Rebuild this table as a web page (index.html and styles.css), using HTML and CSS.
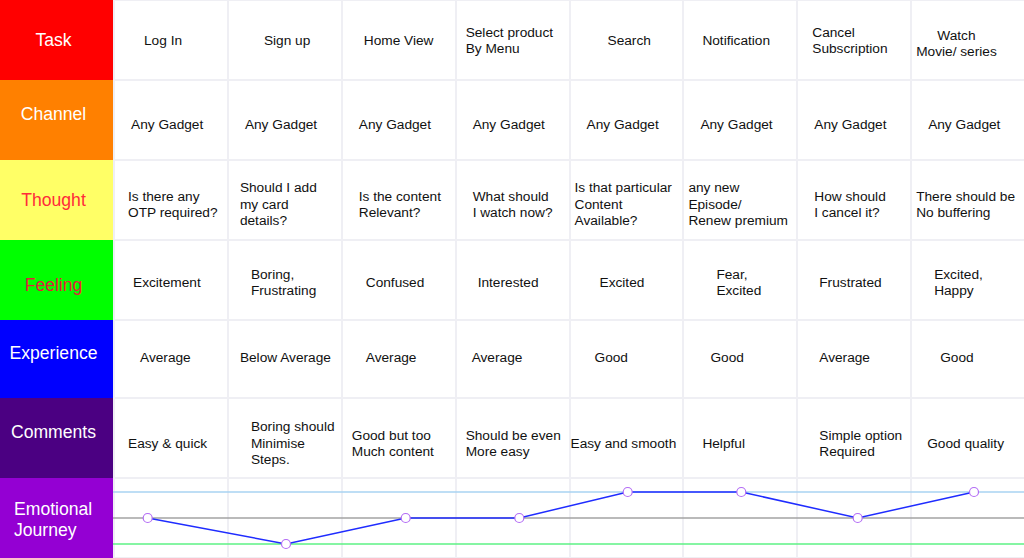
FILE: index.html
```html
<!DOCTYPE html>
<html lang="en">
<head>
<meta charset="utf-8">
<title>Customer Journey Map</title>
<link rel="stylesheet" href="styles.css">
</head>
<body>
<div class="map">
  <div class="labels">
    <div class="label task">Task</div>
    <div class="label channel">Channel</div>
    <div class="label thought">Thought</div>
    <div class="label feeling">Feeling</div>
    <div class="label experience">Experience</div>
    <div class="label comments">Comments</div>
    <div class="label journey">Emotional<br>Journey</div>
  </div>
  <div class="board">
    <div class="row r-task">
      <div class="cell i29">Log In</div>
      <div class="cell i35">Sign up</div>
      <div class="cell i21">Home View</div>
      <div class="cell i9">Select product<br>By Menu</div>
      <div class="cell i37">Search</div>
      <div class="cell i18">Notification</div>
      <div class="cell i14">Cancel<br>Subscription</div>
      <div class="cell i4 centered low">Watch<br>Movie/ series</div>
    </div>
    <div class="row r-channel">
      <div class="cell i16">Any Gadget</div>
      <div class="cell i16">Any Gadget</div>
      <div class="cell i16">Any Gadget</div>
      <div class="cell i16">Any Gadget</div>
      <div class="cell i16">Any Gadget</div>
      <div class="cell i16">Any Gadget</div>
      <div class="cell i16">Any Gadget</div>
      <div class="cell i16">Any Gadget</div>
    </div>
    <div class="row r-thought">
      <div class="cell i13">Is there any<br>OTP required?</div>
      <div class="cell i11">Should I add<br>my card<br>details?</div>
      <div class="cell i16">Is the content<br>Relevant?</div>
      <div class="cell i16">What should<br>I watch now?</div>
      <div class="cell i4">Is that particular<br>Content<br>Available?</div>
      <div class="cell i4">any new<br>Episode/<br>Renew premium</div>
      <div class="cell i16">How should<br>I cancel it?</div>
      <div class="cell i4">There should be<br>No buffering</div>
    </div>
    <div class="row r-feeling">
      <div class="cell i18">Excitement</div>
      <div class="cell i22">Boring,<br>Frustrating</div>
      <div class="cell i23">Confused</div>
      <div class="cell i21">Interested</div>
      <div class="cell i29">Excited</div>
      <div class="cell i32">Fear,<br>Excited</div>
      <div class="cell i21">Frustrated</div>
      <div class="cell i22">Excited,<br>Happy</div>
    </div>
    <div class="row r-experience">
      <div class="cell i25">Average</div>
      <div class="cell i11">Below Average</div>
      <div class="cell i23">Average</div>
      <div class="cell i15">Average</div>
      <div class="cell i24">Good</div>
      <div class="cell i26">Good</div>
      <div class="cell i21">Average</div>
      <div class="cell i28">Good</div>
    </div>
    <div class="row r-comments">
      <div class="cell i13">Easy &amp; quick</div>
      <div class="cell i22">Boring should<br>Minimise<br>Steps.</div>
      <div class="cell i9">Good but too<br>Much content</div>
      <div class="cell i9">Should be even<br>More easy</div>
      <div class="cell i0">Easy and smooth</div>
      <div class="cell i18">Helpful</div>
      <div class="cell i21">Simple option<br>Required</div>
      <div class="cell i15">Good quality</div>
    </div>
    <div class="row r-journey">
      <div class="cell"></div>
      <div class="cell"></div>
      <div class="cell"></div>
      <div class="cell"></div>
      <div class="cell"></div>
      <div class="cell"></div>
      <div class="cell"></div>
      <div class="cell"></div>
      <svg class="chart" width="911" height="78" viewBox="0 0 911 78" aria-hidden="true">
        <line x1="0" y1="13" x2="911" y2="13" stroke="#a9d3f2" stroke-width="1.3"/>
        <line x1="0" y1="39" x2="911" y2="39" stroke="#a3a3a3" stroke-width="1.3"/>
        <line x1="0" y1="65" x2="911" y2="65" stroke="#5cf285" stroke-width="1.3"/>
        <polyline fill="none" stroke="#1f2cff" stroke-width="1.5" points="34.7,39 173,65 292.7,39 406.3,39 514.7,13 628.3,13 744.7,39 861,13"/>
        <g fill="#fff" stroke="#b36cf5" stroke-width="1.2">
          <circle cx="34.7" cy="39" r="4.5"/>
          <circle cx="173" cy="65" r="4.5"/>
          <circle cx="292.7" cy="39" r="4.5"/>
          <circle cx="406.3" cy="39" r="4.5"/>
          <circle cx="514.7" cy="13" r="4.5"/>
          <circle cx="628.3" cy="13" r="4.5"/>
          <circle cx="744.7" cy="39" r="4.5"/>
          <circle cx="861" cy="13" r="4.5"/>
        </g>
      </svg>
    </div>
  </div>
</div>
</body>
</html>
```

FILE: styles.css
```css
html, body {
  margin: 0;
  padding: 0;
  background: #ffffff;
}

body {
  width: 1024px;
  height: 558px;
  overflow: hidden;
  font-family: "Liberation Sans", Arial, Helvetica, sans-serif;
}

.map {
  display: flex;
  height: 558px;
}

/* Left label column */
.labels {
  width: 113px;
  flex: none;
  display: flex;
  flex-direction: column;
}

.label {
  height: 80px;
  box-sizing: border-box;
  display: flex;
  align-items: center;
  justify-content: center;
  padding-right: 6px;
  color: #ffffff;
  font-size: 17.6px;
  line-height: 21px;
}

.task { background: #ff0000; }
.channel { background: #ff8000; padding-bottom: 12px; }
.thought { background: #ffff66; color: #ff2b3a; }
.feeling { background: #00ff00; color: #e3203a; padding-top: 10px; }
.experience { background: #0000ff; height: 78px; padding-bottom: 12px; }
.comments { background: #4b0082; padding-bottom: 12px; }
.journey {
  background: #9400d3;
  justify-content: flex-start;
  padding: 4px 0 0 14px;
}

/* Board */
.board {
  flex: 1;
  min-width: 0;
  background: #efeff4;
  padding: 1px 0 1px 2px;
  display: flex;
  flex-direction: column;
  gap: 2px;
}

.row {
  display: grid;
  grid-template-columns: repeat(8, 1fr);
  gap: 2px;
  height: 78px;
  flex: none;
}

.r-experience { height: 76px; }

.cell {
  background: #ffffff;
  box-sizing: border-box;
  display: flex;
  align-items: center;
  white-space: nowrap;
  color: #111111;
  font-size: 13.7px;
  line-height: 16.5px;
  padding-top: 2px;
}

.r-channel .cell,
.r-thought .cell { padding-top: 10px; }
.r-feeling .cell { padding-top: 6px; }
.r-experience .cell { padding-top: 0; padding-bottom: 2px; }
.r-comments .cell { padding-top: 12px; }
.r-journey .cell { padding-top: 0; }

.centered { text-align: center; }
.r-task .low { padding-top: 8px; }

.i0 { padding-left: 0; }
.i4 { padding-left: 4px; }
.i9 { padding-left: 9px; }
.i11 { padding-left: 11px; }
.i13 { padding-left: 13px; }
.i14 { padding-left: 14px; }
.i15 { padding-left: 15px; }
.i16 { padding-left: 16px; }
.i18 { padding-left: 18px; }
.i21 { padding-left: 21px; }
.i22 { padding-left: 22px; }
.i23 { padding-left: 23px; }
.i24 { padding-left: 24px; }
.i25 { padding-left: 25px; }
.i26 { padding-left: 26px; }
.i28 { padding-left: 28px; }
.i29 { padding-left: 29px; }
.i32 { padding-left: 32px; }
.i35 { padding-left: 35px; }
.i37 { padding-left: 37px; }

/* Emotional journey chart overlays the last row */
.r-journey {
  position: relative;
}

.chart {
  position: absolute;
  left: -2px;
  top: 0;
  overflow: visible;
}
```
